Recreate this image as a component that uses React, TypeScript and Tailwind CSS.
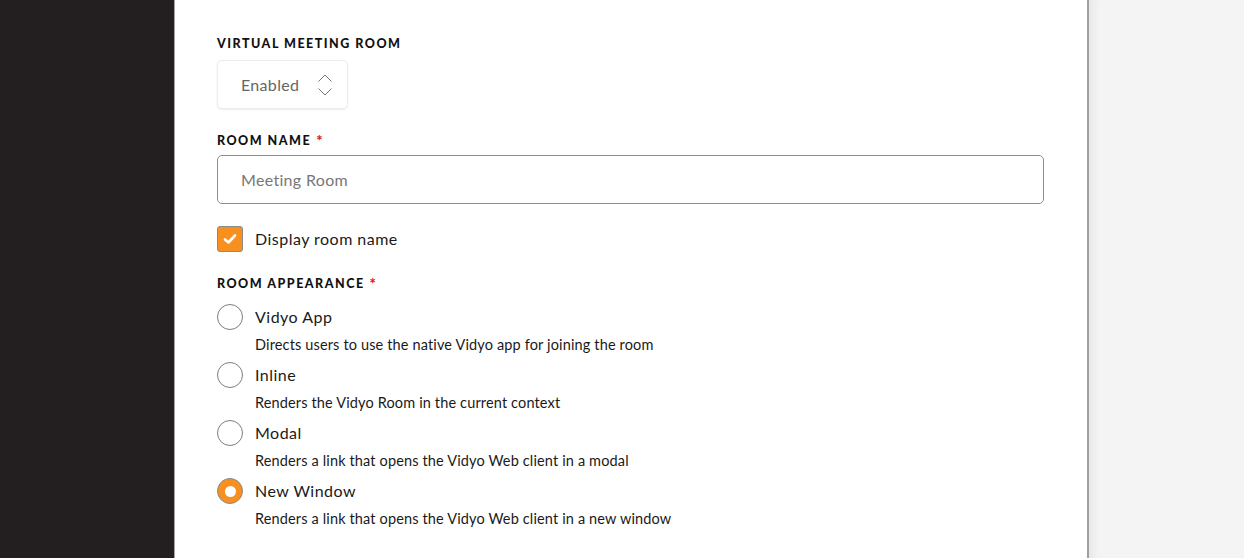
import type { FC } from 'react';

const options = [
  { name: 'Vidyo App', desc: 'Directs users to use the native Vidyo app for joining the room' },
  { name: 'Inline', desc: 'Renders the Vidyo Room in the current context' },
  { name: 'Modal', desc: 'Renders a link that opens the Vidyo Web client in a modal' },
  { name: 'New Window', desc: 'Renders a link that opens the Vidyo Web client in a new window' },
];

const Label: FC<{ text: string; required?: boolean }> = ({ text, required }) => (
  <div className="flex items-start gap-[5px] h-[16px] leading-[16px] text-[12.5px] font-black tracking-[0.12em] text-[#111]">
    <span>{text}</span>
    {required && <span className="text-[#e01b1b] text-[15px] leading-[14px] tracking-normal">*</span>}
  </div>
);

export default function App() {
  return (
    <div className="flex h-[558px] w-[1244px] overflow-hidden" style={{ fontFamily: 'Lato, "Open Sans", sans-serif' }}>
      <div className="w-[174px] shrink-0 bg-[#231f20]" />
      <div className="w-[915px] shrink-0 bg-white border-l border-[#a3a3a3] border-r-2 border-r-[#a0a0a0] pl-[42px] pr-[43px] pt-[36px]">
        <Label text="VIRTUAL MEETING ROOM" />
        <div className="mt-[8px] flex items-center w-[131px] h-[49px] rounded-[5px] border border-[#ececec] shadow-[0_1px_2px_rgba(0,0,0,0.08)] pl-[23px] pr-[14px] justify-between">
          <span className="text-[16px] tracking-[0.02em] text-[#666]">Enabled</span>
          <svg width="16" height="28" viewBox="0 0 16 28" fill="none" stroke="#777" strokeWidth="1">
            <path d="M1.5 10.5 L8 4 L14.5 10.5" />
            <path d="M1.5 17.5 L8 24 L14.5 17.5" />
          </svg>
        </div>

        <div className="mt-[24px]">
          <Label text="ROOM NAME" required />
        </div>
        <div className="mt-[6px] flex items-center h-[49px] w-[827px] rounded-[5px] border border-[#8d8d8d] pl-[23px] text-[16px] tracking-[0.02em] text-[#777]">
          Meeting Room
        </div>

        <div className="mt-[22px] flex items-center gap-[12px] h-[26px]">
          <div className="w-[26px] h-[26px] rounded-[3px] bg-[#f7901e] border border-[#8a8a8a] flex items-center justify-center">
            <svg width="14" height="12" viewBox="0 0 14 12" fill="none" stroke="white" strokeWidth="2.6" strokeLinecap="round" strokeLinejoin="round">
              <path d="M2 6.5 L5.5 9.5 L12 2.5" />
            </svg>
          </div>
          <span className="text-[16px] tracking-[0.03em] text-[#1a1a1a]">Display room name</span>
        </div>

        <div className="mt-[24px]">
          <Label text="ROOM APPEARANCE" required />
        </div>
        <div className="mt-[12px] flex flex-col gap-[7px]">
          {options.map((o, i) => {
            const checked = i === options.length - 1;
            return (
              <div key={o.name}>
                <div className="flex items-center gap-[12px] h-[26px]">
                  {checked ? (
                    <div className="w-[26px] h-[26px] rounded-full bg-[#f7901e] border border-[#8a8a8a] flex items-center justify-center">
                      <div className="w-[11px] h-[11px] rounded-full bg-white" />
                    </div>
                  ) : (
                    <div className="w-[26px] h-[26px] rounded-full border border-[#7d7d7d] bg-white" />
                  )}
                  <span className="text-[16px] tracking-[0.03em] text-[#1a1a1a]">{o.name}</span>
                </div>
                <div className="mt-[5px] pl-[38px] leading-[20px] text-[14.5px] tracking-[0.01em] text-[#1a1a1a]">{o.desc}</div>
              </div>
            );
          })}
        </div>
      </div>
      <div className="flex-1 bg-[#f4f4f4] shadow-[inset_10px_0_10px_-6px_rgba(0,0,0,0.06)]" />
    </div>
  );
}
